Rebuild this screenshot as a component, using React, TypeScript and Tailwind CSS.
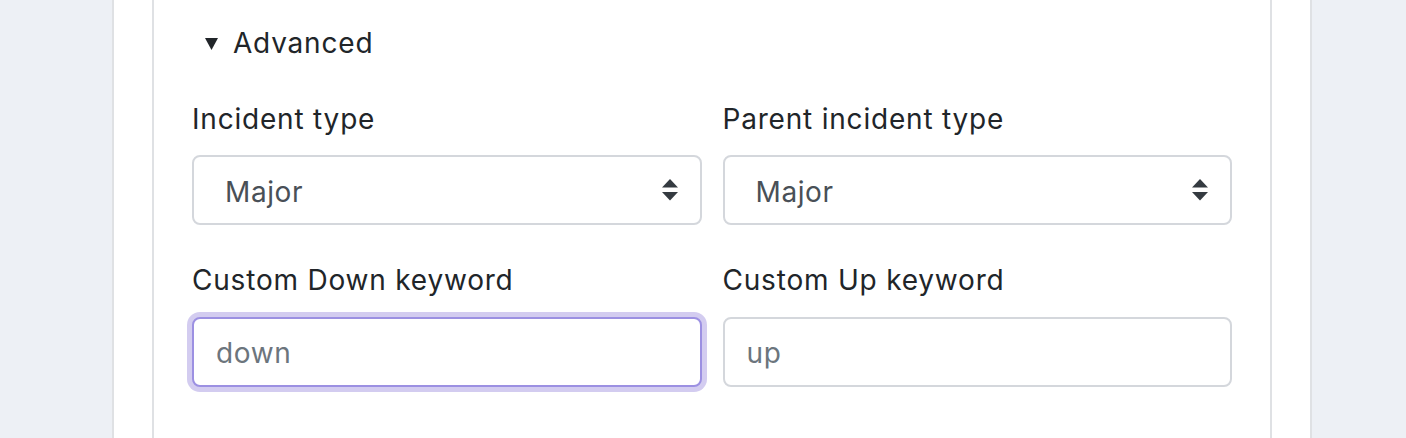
import React from "react";

function SelectArrows() {
  return (
    <svg width="16" height="22" viewBox="0 0 16 22" className="absolute right-[22px] top-1/2 -translate-y-1/2">
      <polygon points="8,0 16,8.5 0,8.5" fill="#343a40" />
      <polygon points="0,13 16,13 8,21.5" fill="#343a40" />
    </svg>
  );
}

function SelectBox({ value }: { value: string }) {
  return (
    <div className="relative h-[70px] rounded-[8px] border-2 border-[#d4d7dc] bg-white flex items-center pl-[31px] pt-[3px] text-[28px] tracking-[0.6px] text-[#495057]">
      {value}
      <SelectArrows />
    </div>
  );
}

function InputBox({ placeholder, focused }: { placeholder: string; focused?: boolean }) {
  return (
    <div
      className={
        focused
          ? "h-[70px] rounded-[8px] border-2 border-[#9c90e2] shadow-[0_0_0_5px_#d3ccf0] bg-white flex items-center pl-[22px] pt-[1px] text-[28px] tracking-[0.6px] text-[#6c757d]"
          : "h-[70px] rounded-[8px] border-2 border-[#d4d7dc] bg-white flex items-center pl-[22px] pt-[1px] text-[28px] tracking-[0.6px] text-[#6c757d]"
      }
    >
      {placeholder}
    </div>
  );
}

export default function App() {
  return (
    <div className="w-[1406px] h-[438px] overflow-hidden bg-[#edf0f5]" style={{ fontFamily: "Inter, 'Noto Sans', sans-serif" }}>
      <div className="ml-[112px] w-[1200px] h-[438px] bg-white border-x-2 border-[#dfe1e4] pl-[38px] pr-[38px]">
        <div className="h-[438px] border-x-2 border-[#dfe1e4] px-[38px] pt-[23px]">
          <div className="h-[40px] flex items-center pl-[13px] text-[28px] tracking-[0.8px] text-[#212529]">
            <svg width="13" height="12" viewBox="0 0 13 12" className="mr-[15px] mt-[1px]">
              <polygon points="0,0 13,0 6.5,12" fill="#212529" />
            </svg>
            Advanced
          </div>
          <div className="grid grid-cols-2 gap-x-[21px] mt-[36px]">
            <div>
              <div className="h-[40px] leading-[40px] text-[28px] tracking-[0.8px] text-[#212529] mb-[16px]">Incident type</div>
              <SelectBox value="Major" />
            </div>
            <div>
              <div className="h-[40px] leading-[40px] text-[28px] tracking-[0.8px] text-[#212529] mb-[16px]">Parent incident type</div>
              <SelectBox value="Major" />
            </div>
            <div className="mt-[35px]">
              <div className="h-[40px] leading-[40px] text-[28px] tracking-[0.8px] text-[#212529] mb-[17px]">Custom Down keyword</div>
              <InputBox placeholder="down" focused />
            </div>
            <div className="mt-[35px]">
              <div className="h-[40px] leading-[40px] text-[28px] tracking-[0.8px] text-[#212529] mb-[17px]">Custom Up keyword</div>
              <InputBox placeholder="up" />
            </div>
          </div>
        </div>
      </div>
    </div>
  );
}
